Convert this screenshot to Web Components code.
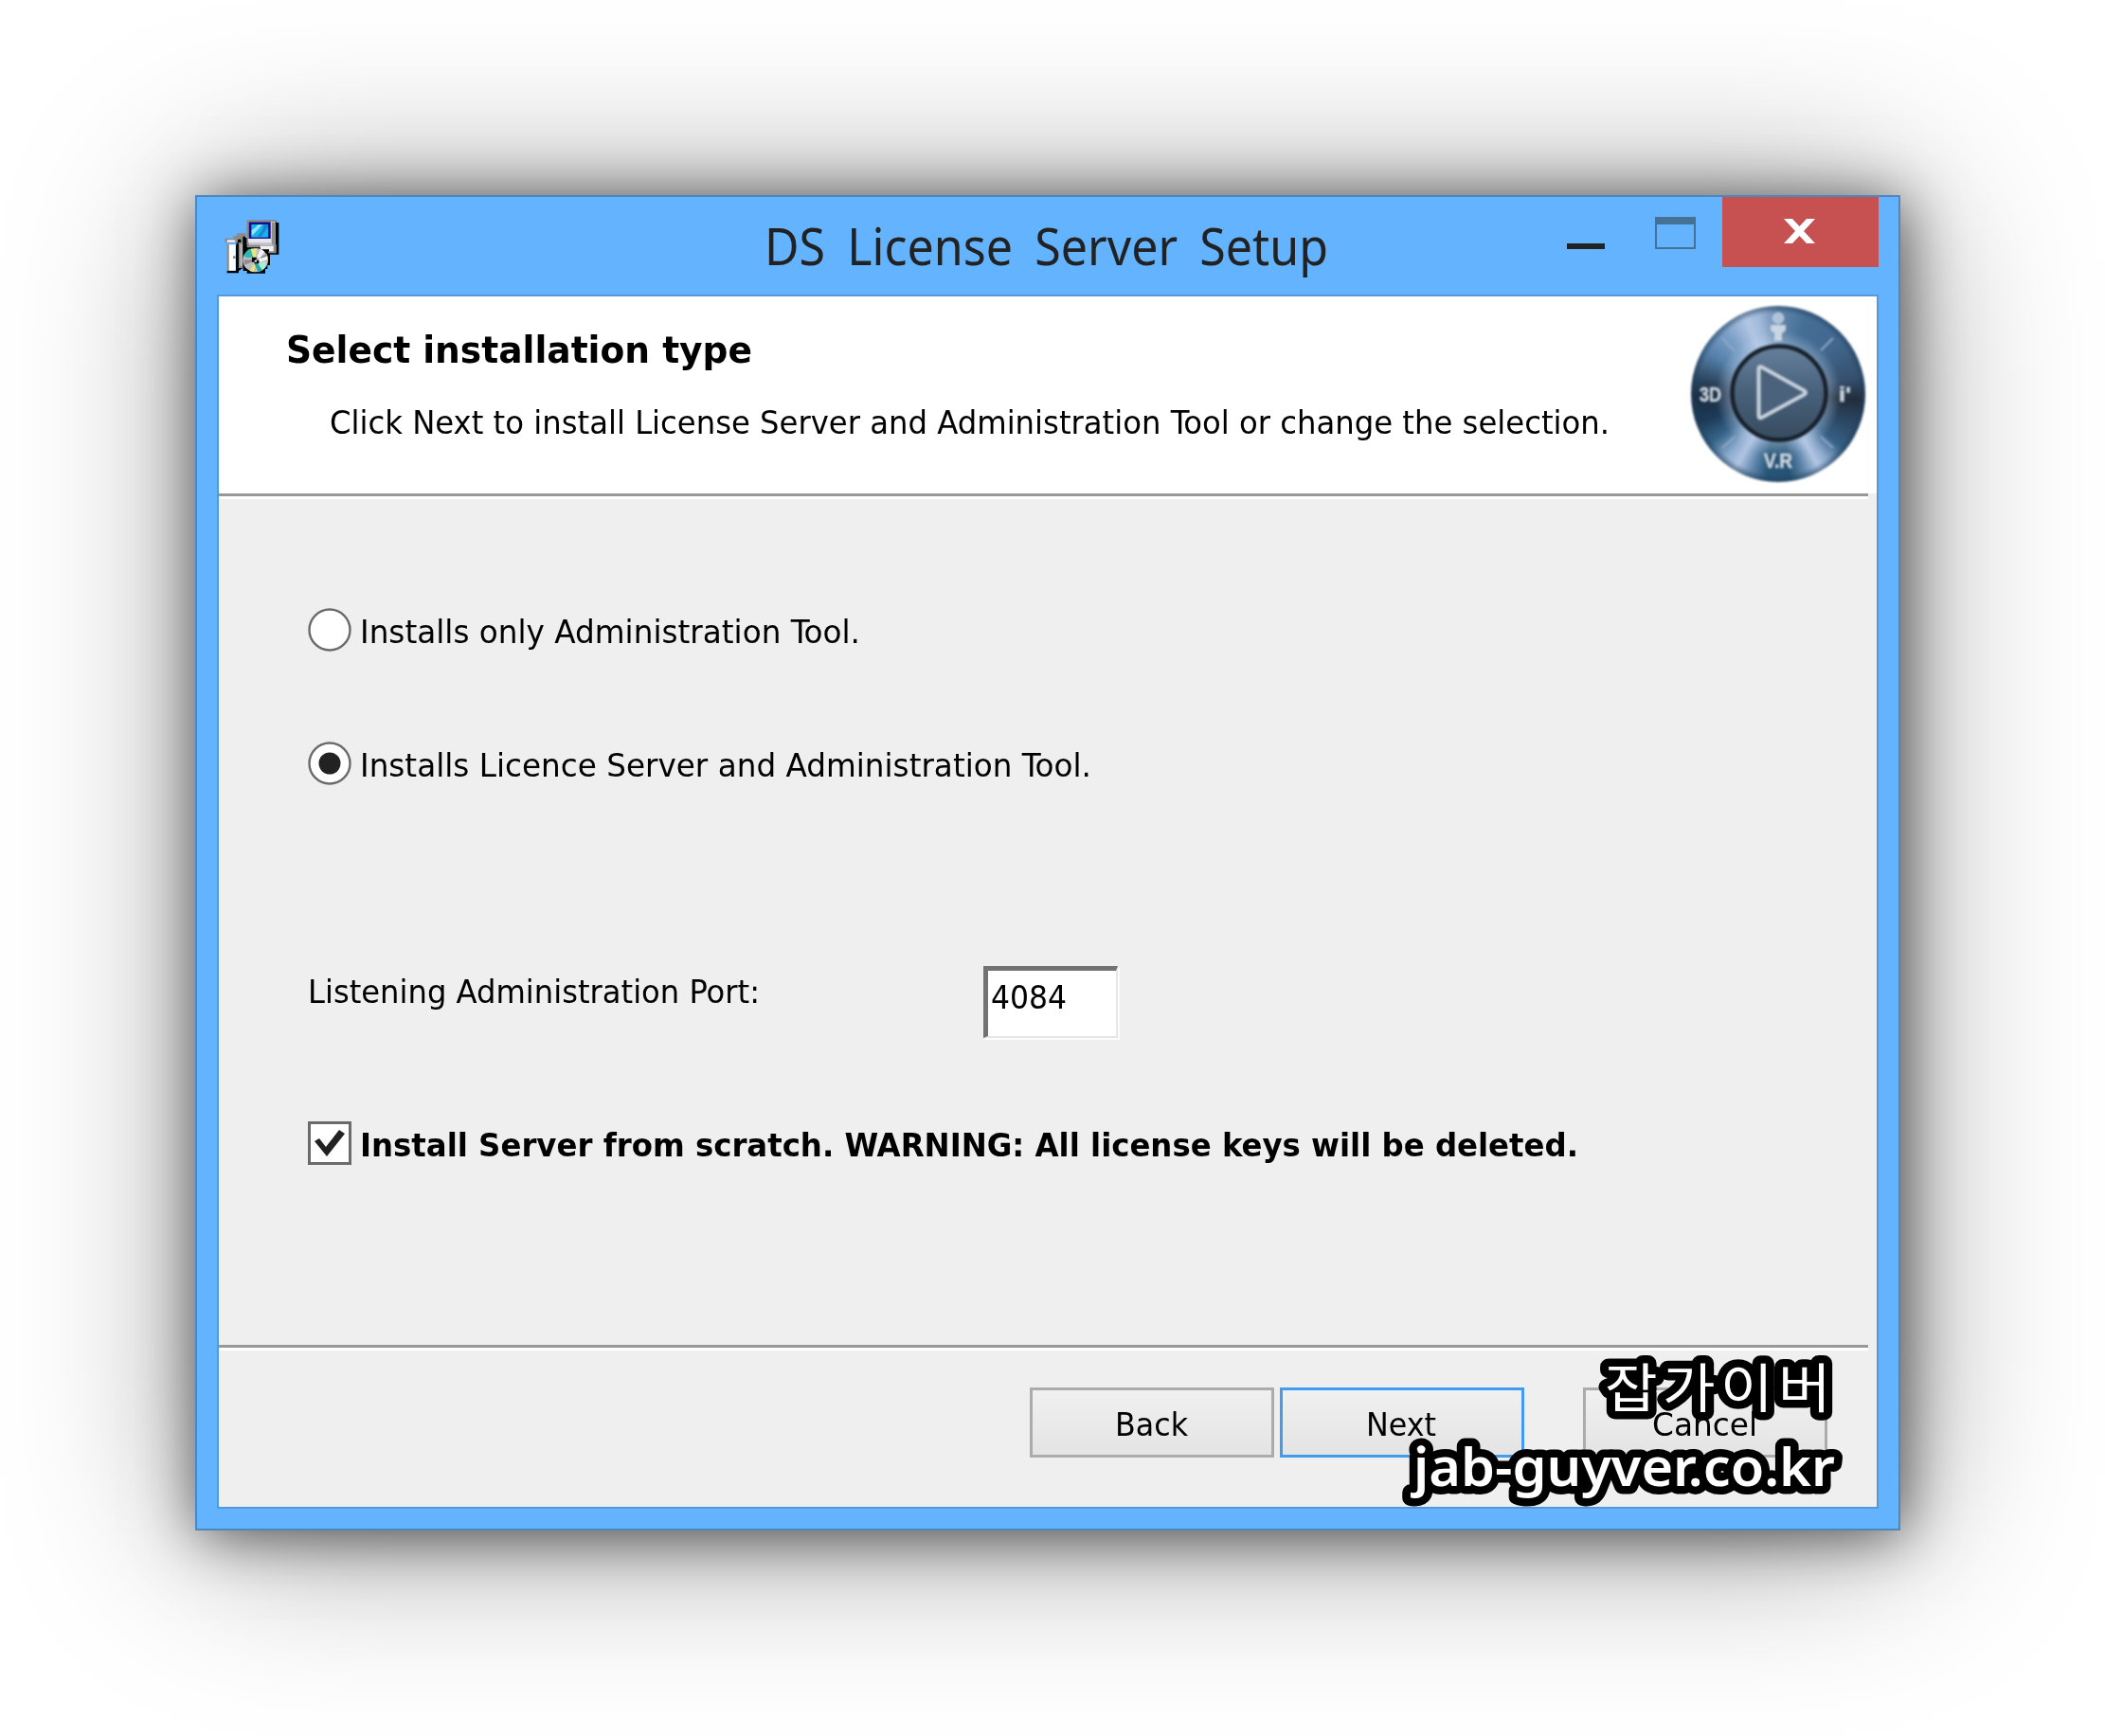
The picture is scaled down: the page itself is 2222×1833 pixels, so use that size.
<!DOCTYPE html>
<html lang="en">
<head>
<meta charset="utf-8">
<title>DS License Server Setup</title>
<style>
html, body {
    margin: 0;
    padding: 0;
}
body {
    width: 2222px;
    height: 1833px;
    overflow: hidden;
    background: #fff;
    font-family: "DejaVu Sans Condensed", "DejaVu Sans", sans-serif;
    font-size: 34px;
    line-height: 40px;
    color: #000;
}
</style>
</head>
<body>
<setup-window caption="DS License Server Setup">
    <setup-header slot="header">
        <fit-label slot="title" width="492">Select installation type</fit-label>
        <fit-label slot="text" width="1351">Click Next to install License Server and Administration Tool or change the selection.</fit-label>
    </setup-header>
    <setup-option type="radio"><fit-label width="528">Installs only Administration Tool.</fit-label></setup-option>
    <setup-option type="radio" checked style="margin-top: 95px"><fit-label width="772">Installs Licence Server and Administration Tool.</fit-label></setup-option>
    <port-field value="4084"><fit-label width="477">Listening Administration Port:</fit-label></port-field>
    <setup-option type="checkbox" checked bold style="margin-top: 86px"><fit-label width="1286">Install Server from scratch. WARNING: All license keys will be deleted.</fit-label></setup-option>
    <setup-button slot="footer"><fit-label width="77">Back</fit-label></setup-button>
    <setup-button slot="footer" primary><fit-label width="74">Next</fit-label></setup-button>
    <setup-button slot="footer" style="margin-left: 56px"><fit-label width="111">Cancel</fit-label></setup-button>
</setup-window>
<site-mark></site-mark>

<script>
// Text squeezed or stretched horizontally to a given width
class FitLabel extends HTMLElement {
    constructor() {
        super();
        this.attachShadow({mode: 'open'});
    }

    connectedCallback() {
        this.shadowRoot.innerHTML = `
            <style>
            :host {
                display: block;
                flex: none;
                white-space: nowrap;
            }
            span {
                display: inline-block;
                transform-origin: 0 50%;
            }
            </style>
            <span><slot></slot></span>
        `;
        const width = Number(this.getAttribute('width'));
        const span = this.shadowRoot.querySelector('span');
        this.style.width = `${width}px`;
        span.style.transform = `scaleX(${width / span.getBoundingClientRect().width})`;
    }
}

class InstallerIcon extends HTMLElement {
    constructor() {
        super();
        this.attachShadow({mode: 'open'});
        this.shadowRoot.innerHTML = `
            <style>
            :host {
                display: block;
                width: 58px;
                height: 59px;
            }
            svg {
                display: block;
            }
            </style>
            <svg width="58" height="59" viewBox="141 122 174 177">
                <path fill="#000" d="M218 128h86v6h9v101h-28v34h-8v12h-7v14h-58v-8h-12v-10l-14 10v7h-37v-8h30v-90h6v-14h30z"/>
                <path fill="#8b8b8b" d="M142 184h28v-8h10v-8h28v10h-4v40h-5v60h-14v-80h-43z"/>
                <path fill="#c8c8c8" d="M149 189h26v8h-26z"/>
                <path fill="#fff" d="M154 204h22v82h-22zM150 190h23v5h-23z"/>
                <path fill="#8b8b8b" d="M149 202h6v84h-6zM168 240h8v8h-8z"/>
                <path fill="#000" d="M177 204h8v86h-8zM183 187h10v10h-10zM199 178h8v42h-8z"/>
                <path fill="#b5b5b5" d="M190 202h8v70h-8z"/>
                <path fill="#8c8c8c" d="M213 125h90v8h-84v72h-8v-72z"/>
                <path fill="#c9c5cc" d="M218 131h83v75h-83z"/>
                <path fill="#909090" d="M291 134h12v70h-12z"/>
                <path fill="#e9e6ef" d="M216 185h72v12h-72z"/>
                <path fill="#10108c" d="M218 132h69v53h-69z"/>
                <path fill="#16b4ea" d="M226 140h53v41h-53z"/>
                <path fill="#8ee8fa" d="M227 176v-18l12-8 8-9h14l-16 17-6 7z"/>
                <path fill="#1c83d4" d="M265 141h14v8l-14 18-10 14h-12l18-24z"/>
                <path fill="#b7b4ba" d="M222 204h78v8h-78z"/>
                <path fill="#f1eff3" d="M254 209h46v10h-46zM282 218h18v11h-18z"/>
                <path fill="#8c8c8c" d="M212 205h42v8h-42zM296 203h9v28h-25v-6h16z"/>
                <ellipse cx="239" cy="253" rx="40" ry="38" fill="#c2bfc4"/>
                <path fill="#31b9af" d="M201 238l14-18 13-4 5 28-22 2z"/>
                <path fill="#e8e47e" d="M224 218h19l-3 26-8 1z"/>
                <path fill="#e8e47e" d="M220 287l14-22 6 2-6 24z"/>
                <path fill="#a7efd0" d="M246 262l28-4-5 19-10 9z"/>
                <path fill="#20aaa7" d="M235 264l9-3 17 24-12 7z"/>
                <path fill="#f5f5f6" d="M249 250l28-11v12l-27 9zM244 242l12-25 12 10-17 20z"/>
                <path fill="#8f8f91" d="M258 242l17-10 2 8-19 7zM203 252l24 0-1 8-22 8z"/>
                <path fill="#000" d="M228 244h14v9h8v11h-14v-5h-9z"/>
                <path fill="#eaeaea" d="M236 253h7v6h-7z"/>
            </svg>
        `;
    }
}

class CompassLogo extends HTMLElement {
    constructor() {
        super();
        this.attachShadow({mode: 'open'});
        this.shadowRoot.innerHTML = `
            <style>
            :host {
                display: block;
                width: 184px;
                height: 186px;
                border-radius: 50%;
                filter: blur(.8px);
                background:
                    radial-gradient(closest-side, rgba(190, 210, 235, .45) 54%, transparent 72%, transparent 92%, rgba(30, 62, 92, .55) 99%),
                    conic-gradient(#6286ab 0deg, #466f97 20deg, #41678c 50deg, #35506e 78deg, #222d3c 94deg, #29425c 108deg,
                        #355f84 130deg, #90abcf 144deg, #b3c6e4 151deg, #5b83a8 162deg, #265273 172deg, #285575 188deg,
                        #5b83a8 198deg, #b1c5e4 210deg, #88a7cb 220deg, #376489 234deg, #1c3b58 250deg, #1b2c43 268deg,
                        #2b435d 280deg, #547fa8 300deg, #7da0c7 320deg, #b2c6e3 337deg, #a0b9da 346deg, #6286ab 360deg);
            }
            svg {
                display: block;
            }
            text {
                font: bold 22px "Liberation Sans", sans-serif;
                fill: #ccd5df;
                stroke: #ccd5df;
                stroke-width: .6px;
            }
            </style>
            <svg width="184" height="186" viewBox="0 0 184 186">
                <defs>
                    <linearGradient id="core" x1="0" y1="0" x2="0" y2="1">
                        <stop offset="0" stop-color="#66809c"/>
                        <stop offset=".5" stop-color="#48607a"/>
                        <stop offset="1" stop-color="#374c60"/>
                    </linearGradient>
                </defs>
                <circle cx="93" cy="92" r="49.5" fill="url(#core)" stroke="#17202a" stroke-width="4.5"/>
                <path d="M71.5 66.500q0-3 3-2l45 25q3 2 0 4l-45 24.500q-3 1-3-2z" fill="#4a627b" stroke="#c9d3de" stroke-width="4" stroke-linejoin="round"/>
                <path d="M33 34l13 14M150 34l-13 13M33 150l13-12M150 150l-13-12" stroke="#8fabc8" stroke-width="2" fill="none"/>
                <circle cx="92" cy="13" r="6.500" fill="#b0c4d8"/>
                <path d="M84 20h16v6l-4 3v8h-8v-8l-4-3z" fill="#c8d5e2"/>
                <text x="9" y="101" textLength="23" lengthAdjust="spacingAndGlyphs">3D</text>
                <text x="156" y="101" textLength="13" lengthAdjust="spacingAndGlyphs">i'</text>
                <text x="77" y="171" textLength="30" lengthAdjust="spacingAndGlyphs">V.R</text>
            </svg>
        `;
    }
}

class WindowControls extends HTMLElement {
    constructor() {
        super();
        this.attachShadow({mode: 'open'});
        this.shadowRoot.innerHTML = `
            <style>
            :host {
                display: flex;
                align-items: flex-start;
            }
            .minimize {
                width: 40px;
                height: 6px;
                margin: 49px 53px 0 0;
                background: #222;
            }
            .maximize {
                box-sizing: border-box;
                width: 43px;
                height: 34px;
                margin: 21px 28px 0 0;
                border: 2px solid #457197;
                border-top-width: 8px;
            }
            .close {
                display: flex;
                width: 165px;
                height: 74px;
                background: #c75050;
            }
            svg {
                display: block;
                margin: 22px 0 0 65px;
            }
            </style>
            <div class="minimize"></div>
            <div class="maximize"></div>
            <div class="close">
                <svg width="33" height="28" viewBox="0 0 33 28">
                    <path d="M0 1h9l7.500 8L24 1h9L21 14l12 13h-9l-7.500-8L9 27H0l12-13z" fill="#fff"/>
                </svg>
            </div>
        `;
    }
}

class SetupWindow extends HTMLElement {
    constructor() {
        super();
        this.attachShadow({mode: 'open'});
    }

    connectedCallback() {
        this.shadowRoot.innerHTML = `
            <style>
            * {
                box-sizing: border-box;
            }
            :host {
                display: flex;
                flex-direction: column;
                box-sizing: border-box;
                width: 1800px;
                height: 1410px;
                margin: 206px 0 0 206px;
                padding: 0 22px 21px;
                border: 2px solid #4c88bf;
                background: #64b3ff;
                box-shadow: 4px 5px 60px rgba(0, 0, 0, .62), 4px 5px 180px rgba(0, 0, 0, .4);
            }
            .bar {
                display: flex;
                align-items: flex-start;
                height: 103px;
                flex: none;
                margin-right: -1px;
            }
            installer-icon {
                margin: 23px 0 0 7px;
            }
            .caption {
                margin: 21px auto 0 512px;
                font: 54px/60px "Noto Sans", "Open Sans", sans-serif;
                word-spacing: 11px;
                color: #222;
            }
            .client {
                flex: 1;
                display: flex;
                flex-direction: column;
                border: 2px solid #5499d9;
                background: #efefef;
                margin: 0 -1px 0 -1px;
            }
            .line {
                flex: none;
                height: 6px;
                width: 1741px;
                border-top: 3px solid #989898;
                border-bottom: 3px solid #fff;
            }
            main {
                height: 893px;
                padding: 115px 0 0 94px;
            }
            footer {
                display: flex;
                justify-content: flex-end;
                gap: 6px;
                padding: 39px 52px 0 0;
            }
            </style>
            <div class="bar">
                <installer-icon></installer-icon>
                <fit-label class="caption" width="595">${this.getAttribute('caption')}</fit-label>
                <window-controls></window-controls>
            </div>
            <div class="client">
                <slot name="header"></slot>
                <div class="line"></div>
                <main><slot></slot></main>
                <div class="line"></div>
                <footer><slot name="footer"></slot></footer>
            </div>
        `;
    }
}

class SetupHeader extends HTMLElement {
    constructor() {
        super();
        this.attachShadow({mode: 'open'});
        this.shadowRoot.innerHTML = `
            <style>
            :host {
                display: flex;
                justify-content: space-between;
                box-sizing: border-box;
                height: 208px;
                padding: 33px 12px 0 71px;
                background: #fff;
            }
            .title {
                font-size: 39px;
                font-weight: bold;
                line-height: 48px;
                margin-bottom: 32px;
            }
            .text {
                padding-left: 46px;
            }
            compass-logo {
                margin-top: -23px;
            }
            </style>
            <div>
                <div class="title"><slot name="title"></slot></div>
                <div class="text"><slot name="text"></slot></div>
            </div>
            <compass-logo></compass-logo>
        `;
    }
}

class SetupOption extends HTMLElement {
    constructor() {
        super();
        this.attachShadow({mode: 'open'});
    }

    connectedCallback() {
        const checked = this.hasAttribute('checked');
        const radio = this.getAttribute('type') === 'radio';
        const box = radio
            ? '<circle cx="23" cy="23" r="21.500" fill="#fff" stroke="#6b6b6b" stroke-width="2.400"/>'
            : '<rect x="1.500" y="1.500" width="43" height="43" fill="#fff" stroke="#6b6b6b" stroke-width="3"/>';
        const mark = radio
            ? '<circle cx="23" cy="23" r="11.500" fill="#222"/>'
            : '<path d="M7 21l5-3 7 9L33 9l6 4-19 24z" fill="#222"/>';

        this.shadowRoot.innerHTML = `
            <style>
            :host {
                display: flex;
                height: 46px;
            }
            :host([bold]) {
                font-weight: bold;
            }
            svg {
                display: block;
                flex: none;
            }
            .label {
                padding: 5px 0 0 9px;
            }
            </style>
            <svg width="46" height="46" viewBox="0 0 46 46">${box}${checked ? mark : ''}</svg>
            <div class="label"><slot></slot></div>
        `;
    }
}

class PortField extends HTMLElement {
    constructor() {
        super();
        this.attachShadow({mode: 'open'});
    }

    connectedCallback() {
        this.shadowRoot.innerHTML = `
            <style>
            :host {
                display: flex;
                height: 78px;
                margin-top: 191px;
            }
            .label {
                width: 713px;
                padding-top: 7px;
                box-sizing: border-box;
            }
            .input {
                box-sizing: border-box;
                width: 142px;
                height: 76px;
                padding: 8px 0 0 3px;
                border: 5px solid;
                border-width: 5px 2px 2px 5px;
                border-color: #727272 #e6e6e6 #e6e6e6 #727272;
                background: #fff;
                box-shadow: 2px 2px 0 #fcfcfc;
            }
            </style>
            <div class="label"><slot></slot></div>
            <div class="input"><fit-label width="80">${this.getAttribute('value')}</fit-label></div>
        `;
    }
}

class SetupButton extends HTMLElement {
    constructor() {
        super();
        this.attachShadow({mode: 'open'});
        this.shadowRoot.innerHTML = `
            <style>
            :host {
                display: flex;
                align-items: center;
                justify-content: center;
                box-sizing: border-box;
                width: 258px;
                height: 74px;
                padding: 3px 2px 0 0;
                border: 3px solid #acacac;
                background: linear-gradient(#f0f0f0, #e4e4e4);
            }
            :host([primary]) {
                border-color: #439bf0;
            }
            </style>
            <slot></slot>
        `;
    }
}

class SiteMark extends HTMLElement {
    constructor() {
        super();
        this.attachShadow({mode: 'open'});
        this.shadowRoot.innerHTML = `
            <style>
            :host {
                display: block;
                position: absolute;
                left: 1470px;
                top: 1419px;
            }
            svg {
                display: block;
            }
            text {
                fill: #fff;
                stroke: #000;
                stroke-width: 17px;
                stroke-linejoin: round;
                paint-order: stroke;
            }
            .name {
                font: 400 56px "Noto Sans CJK KR", sans-serif;
                letter-spacing: 5px;
            }
            .url {
                font: 600 56px "Noto Sans", "Open Sans", sans-serif;
            }
            </style>
            <svg width="490" height="180" viewBox="0 0 490 180">
                <text class="name" x="224" y="67" textLength="244" lengthAdjust="spacingAndGlyphs">잡가이버</text>
                <text class="url" x="22" y="150" textLength="445" lengthAdjust="spacingAndGlyphs">jab-guyver.co.kr</text>
            </svg>
        `;
    }
}

customElements.define('fit-label', FitLabel);
customElements.define('installer-icon', InstallerIcon);
customElements.define('compass-logo', CompassLogo);
customElements.define('window-controls', WindowControls);
customElements.define('setup-window', SetupWindow);
customElements.define('setup-header', SetupHeader);
customElements.define('setup-option', SetupOption);
customElements.define('port-field', PortField);
customElements.define('setup-button', SetupButton);
customElements.define('site-mark', SiteMark);

// Labels slotted into elements defined later were measured before they got their font
document.querySelectorAll('fit-label').forEach(label => label.connectedCallback());
</script>
</body>
</html>
